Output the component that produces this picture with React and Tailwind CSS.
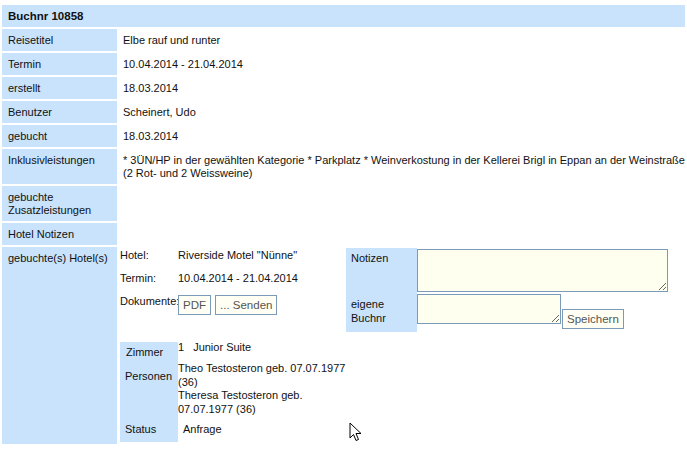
import React from 'react';

const Label = ({ children, className = '' }) => (
  <div className={`bg-[#c9e3fc] pl-[6px] py-[4.5px] ${className}`}>{children}</div>
);

const Value = ({ children, className = '' }) => (
  <div className={`pl-[4px] py-[4.5px] ${className}`}>{children}</div>
);

const btn =
  'h-[20px] px-[4px] border border-[#7b9ab8] bg-[#fffff4] text-[#555] text-[11.5px] leading-[normal]';

const rows = [
  ['Reisetitel', 'Elbe rauf und runter'],
  ['Termin', '10.04.2014 - 21.04.2014'],
  ['erstellt', '18.03.2014'],
  ['Benutzer', 'Scheinert, Udo'],
  ['gebucht', '18.03.2014'],
];

const Cursor = () => (
  <svg
    className="absolute left-[349px] top-[422px]"
    width="14"
    height="21"
    viewBox="0 0 14 21"
  >
    <path
      d="M1 1 L1 16 L4.5 12.5 L7 18.5 L9.5 17.5 L7 11.5 L12 11.5 Z"
      fill="#fff"
      stroke="#000"
      strokeWidth="1"
      strokeLinejoin="miter"
    />
  </svg>
);

export default function App() {
  return (
    <div className="relative w-[687px] h-[455px] bg-white px-[2px] pt-[5px] font-['Liberation_Sans',Arial,sans-serif] text-[11px] leading-[13px] text-[#111]">
      <div className="bg-[#c9e3fc] h-[22px] pl-[6px] flex items-center font-bold text-[11.5px]">
        Buchnr 10858
      </div>

      <div className="grid grid-cols-[115px_1fr] gap-[2px] mt-[2px]">
        {rows.map(([l, v]) => (
          <React.Fragment key={l}>
            <Label>{l}</Label>
            <Value>{v}</Value>
          </React.Fragment>
        ))}

        <Label>Inklusivleistungen</Label>
        <Value>
          * 3ÜN/HP in der gewählten Kategorie * Parkplatz * Weinverkostung in der Kellerei Brigl in Eppan an der Weinstraße
          <br />
          (2 Rot- und 2 Weissweine)
        </Value>

        <Label>
          gebuchte
          <br />
          Zusatzleistungen
        </Label>
        <Value />

        <Label>Hotel Notizen</Label>
        <Value />

        <Label>gebuchte(s) Hotel(s)</Label>
        <div className="pl-[1px] pt-[1px] pb-[2px] flex">
          {/* hotel info */}
          <div className="w-[226px] flex flex-col">
            <div className="grid grid-cols-[58px_1fr] leading-[14px]">
              <div className="h-[23px]">Hotel:</div>
              <div className="h-[23px]">Riverside Motel "Nünne"</div>
              <div className="h-[23px]">Termin:</div>
              <div className="h-[23px]">10.04.2014 - 21.04.2014</div>
              <div className="whitespace-nowrap">Dokumente:</div>
              <div className="flex gap-[4px] pt-[1px]">
                <button className={btn}>PDF</button>
                <button className={btn}>... Senden</button>
              </div>
            </div>

            <div className="mt-[27px] grid grid-cols-[58px_168px] leading-[13.7px]">
              <div className="bg-[#c9e3fc] pl-[6px] pt-[4px] h-[21px]">Zimmer</div>
              <div className="-mt-[1px]">
                1<span className="ml-[9px]">Junior Suite</span>
              </div>
              <div className="bg-[#c9e3fc] pl-[5px] pt-[7px] h-[56px]">Personen</div>
              <div className="-mt-[1px]">
                Theo Testosteron geb. 07.07.1977
                <br />
                (36)
                <br />
                Theresa Testosteron geb.
                <br />
                07.07.1977 (36)
              </div>
              <div className="bg-[#c9e3fc] pl-[5px] pt-[4px] h-[23px]">Status</div>
              <div className="pl-[5px] pt-[4px]">Anfrage</div>
            </div>
          </div>

          {/* notes panel */}
          <div className="grid grid-cols-[71px_auto] self-start">
            <div className="bg-[#c9e3fc] pl-[5px] pt-[4px] h-[45px]">Notizen</div>
            <div>
              <textarea className="block mt-[1px] w-[251px] h-[43px] border border-[#7b9ab8] bg-[#fffff0] outline-none" />
            </div>
            <div className="bg-[#c9e3fc] pl-[5px] pt-[4px] h-[39px] leading-[14px]">
              eigene
              <br />
              Buchnr
            </div>
            <div className="flex items-start">
              <textarea className="block mt-[1px] w-[144px] h-[30px] border border-[#7b9ab8] bg-[#fffff0] outline-none" />
              <button className={`${btn} mt-[16px] ml-[1px] text-[#444]`}>Speichern</button>
            </div>
          </div>
        </div>
      </div>

      <Cursor />
    </div>
  );
}
